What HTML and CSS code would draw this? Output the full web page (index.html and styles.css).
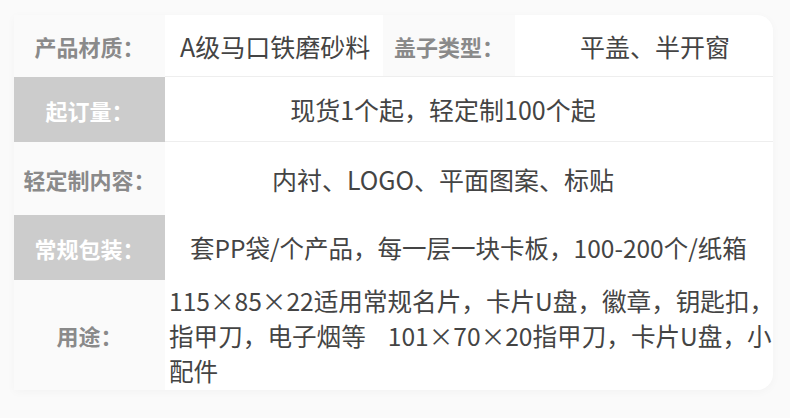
FILE: index.html
```html
<!DOCTYPE html>
<html lang="zh-CN">
<head>
    <meta charset="UTF-8">
    <meta name="viewport" content="width=device-width, initial-scale=1.0">
    <title>产品参数</title>
    <link rel="stylesheet" href="styles.css">
</head>
<body>
    <div class="card">
        <!-- 第一行：材质 + 盖子 -->
        <div class="row row-1 line">
            <div class="label">产品材质：</div>
            <div class="value material">A级马口铁磨砂料</div>
            <div class="label sub-label">盖子类型：</div>
            <div class="value lid">平盖、半开窗</div>
        </div>

        <div class="row row-2 line">
            <div class="label dark">起订量：</div>
            <div class="value center">现货1个起，轻定制100个起</div>
        </div>

        <div class="row row-3">
            <div class="label">轻定制内容：</div>
            <div class="value center">内衬、LOGO、平面图案、标贴</div>
        </div>

        <div class="row row-4">
            <div class="label dark">常规包装：</div>
            <div class="value pack">套PP袋/个产品，每一层一块卡板，100-200个/纸箱</div>
        </div>

        <div class="row row-5">
            <div class="label">用途：</div>
            <div class="value usage">115×85×22适用常规名片，卡片U盘，徽章，钥匙扣，指甲刀，电子烟等&nbsp;&nbsp;&nbsp; 101×70×20指甲刀，卡片U盘，小配件</div>
        </div>
    </div>
</body>
</html>
```

FILE: styles.css
```css
body {
    font-family: "Noto Sans CJK SC", "Noto Sans", sans-serif;
    background-color: #fafafa;
    margin: 0;
    padding: 15px 17px 28px 14px;
}

.card {
    background-color: #ffffff;
    border-radius: 0 16px 16px 0;
    box-shadow: 0px 2px 10px rgba(0, 0, 0, 0.03);
}

.row {
    display: flex;
}

.row-1 { height: 62px; }
.row-2 { height: 65px; }
.row-3 { height: 73px; }
.row-4 { height: 65px; }
.row-5 { height: 110px; }

.label {
    width: 151px;
    flex-shrink: 0;
    background-color: #fafafa;
    color: #8a8a8a;
    font-size: 22px;
    font-weight: 700;
    display: flex;
    align-items: center;
    justify-content: center;
}

.label.dark {
    background-color: #cccccc;
    color: #ffffff;
}

.value {
    flex: 1;
    color: #444444;
    font-size: 25px;
    display: flex;
    align-items: center;
}

.line .value {
    border-bottom: 1px solid #eeeeee;
}

.material {
    flex: 0 0 218px;
    padding-left: 15px;
    box-sizing: border-box;
}

.sub-label {
    width: 132px;
    border-bottom: 1px solid #eeeeee;
}

.lid {
    justify-content: center;
    padding-left: 22px;
}

.center {
    justify-content: center;
    padding-right: 52px;
}

.pack {
    padding-left: 25px;
    font-size: 24.5px;
}

.usage {
    padding-left: 4px;
    margin-right: -20px;
    font-size: 24.6px;
    line-height: 35px;
}
```
